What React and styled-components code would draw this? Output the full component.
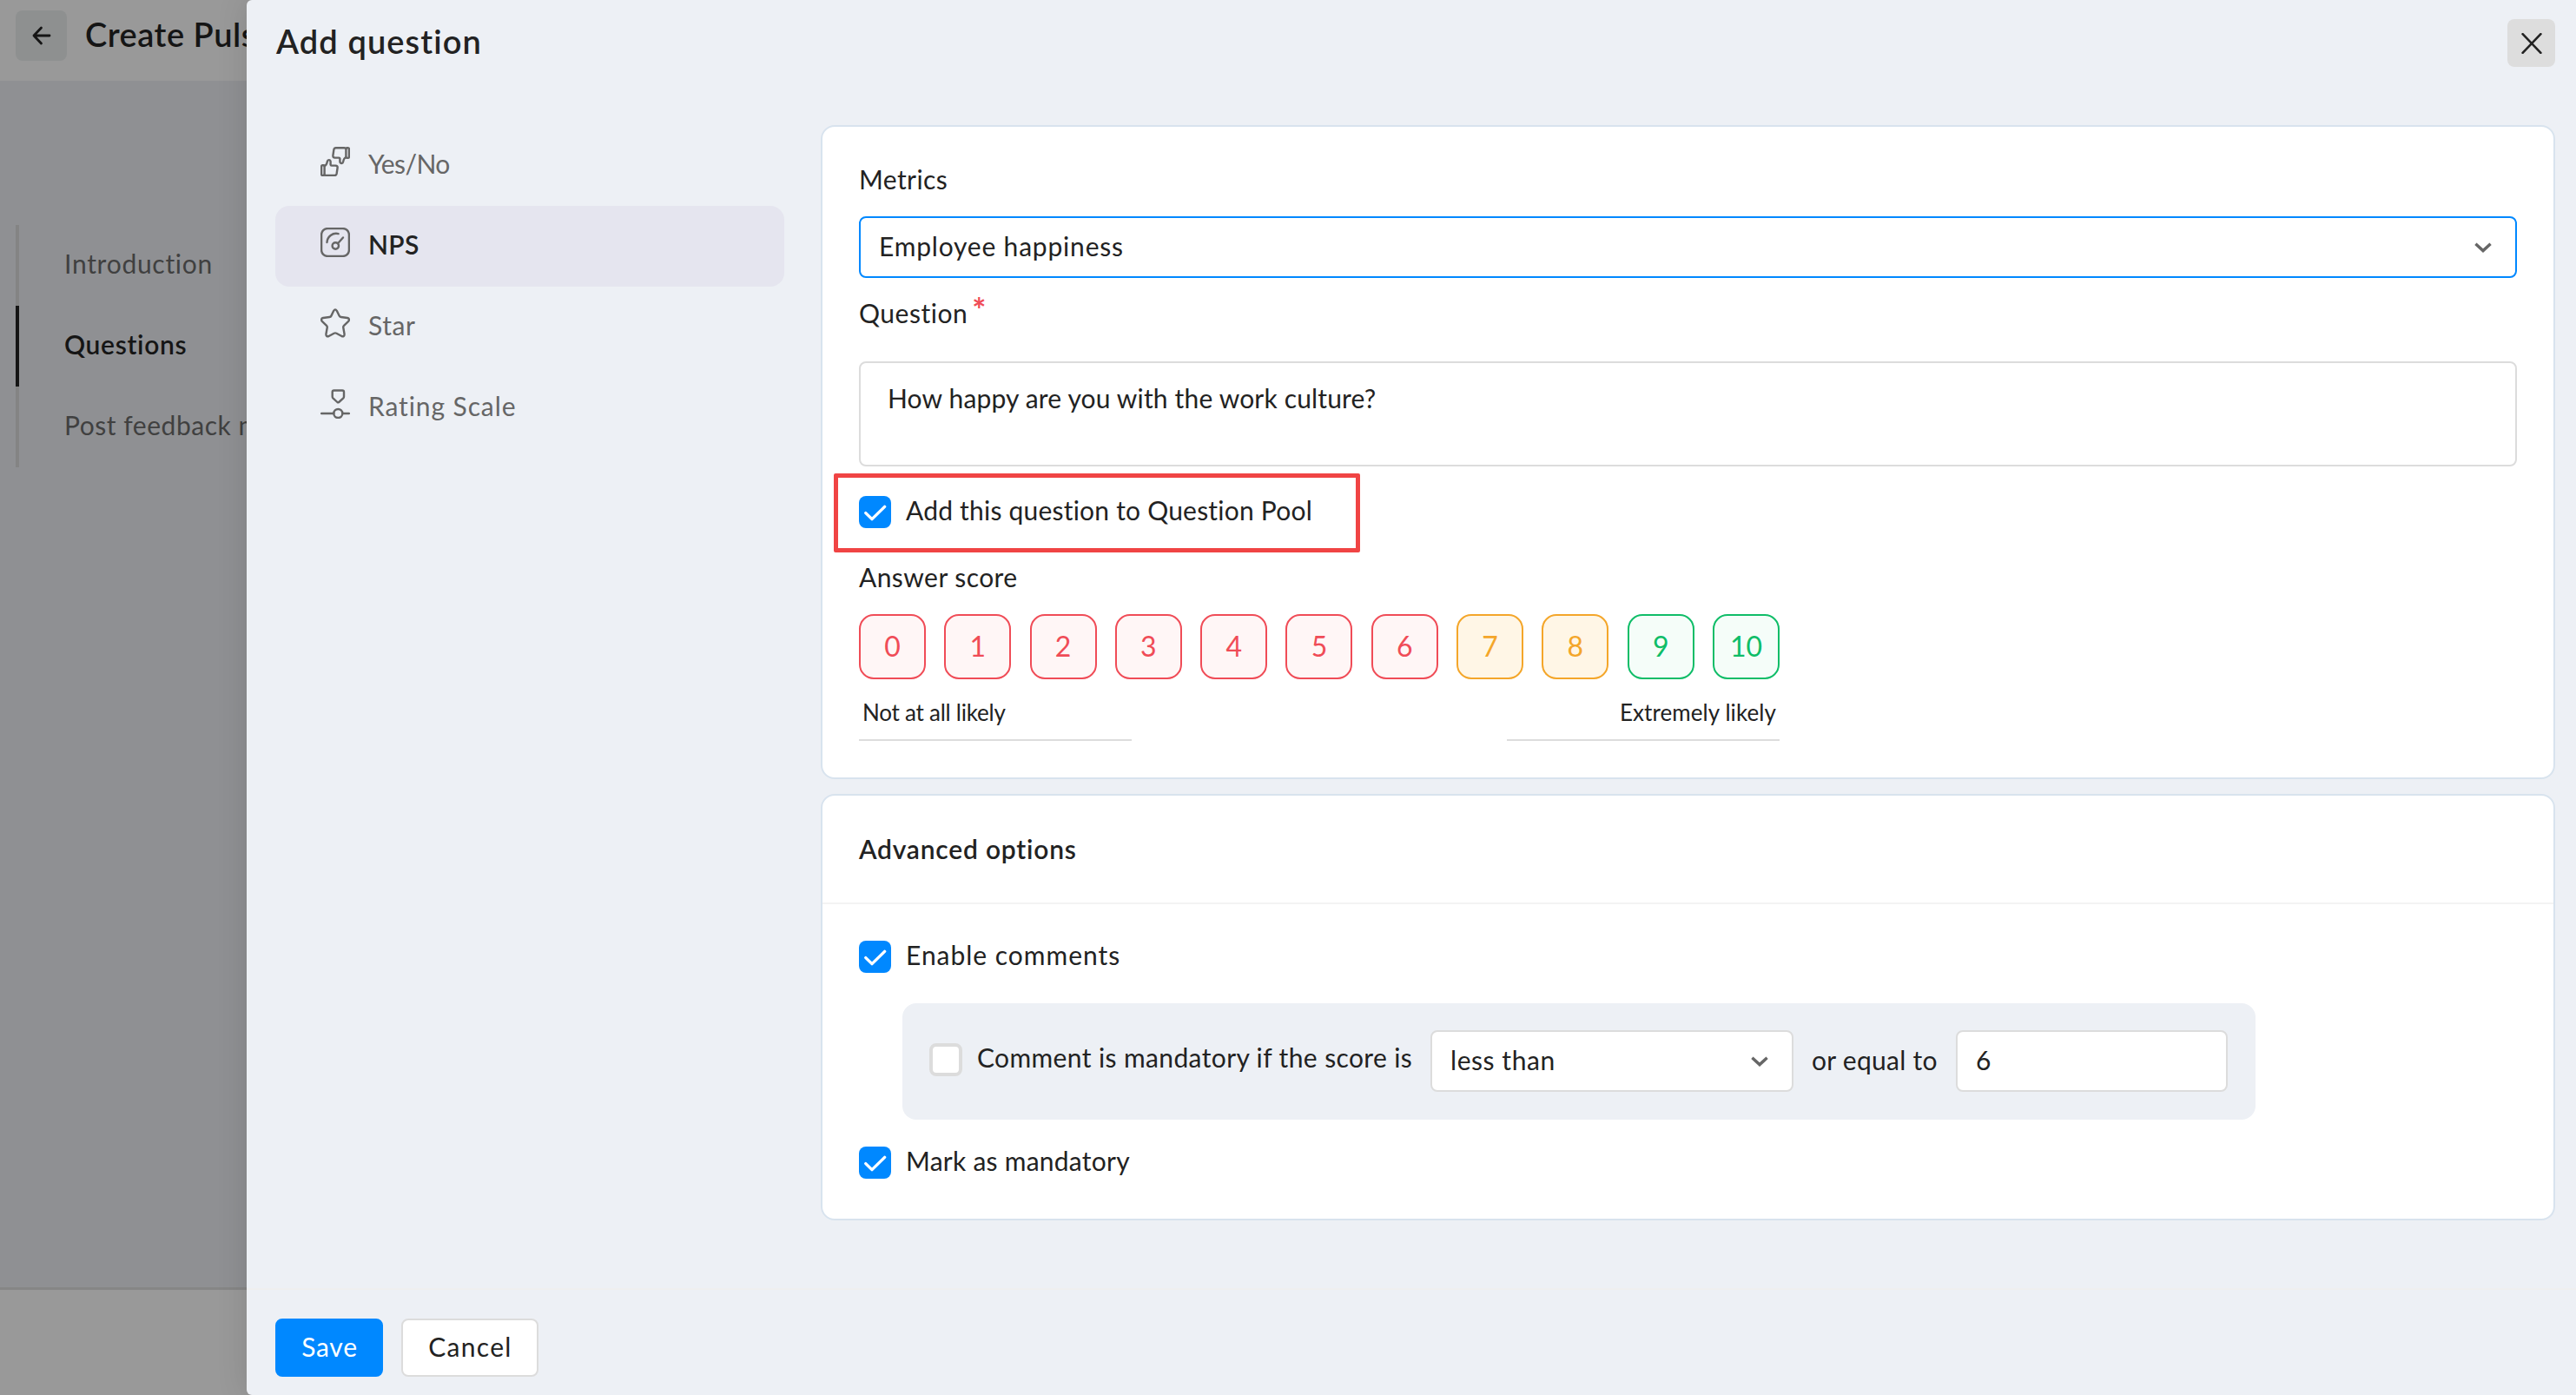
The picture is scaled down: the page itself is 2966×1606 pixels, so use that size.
import React from "react";
import styled, { createGlobalStyle } from "styled-components";

const steps = [
  { label: "Introduction", spacing: 0.72 },
  { label: "Questions", spacing: 0.67, active: true },
  { label: "Post feedback message", spacing: 0.53 },
];

const types = [
  { label: "Yes/No", spacing: -0.6, icon: <ThumbsIcon /> },
  { label: "NPS", spacing: 0.33, icon: <GaugeIcon />, active: true },
  { label: "Star", spacing: 0.58, icon: <StarIcon /> },
  { label: "Rating Scale", spacing: 0.9, icon: <ScaleIcon /> },
];

const tones = {
  red: { line: "#f04c57", fill: "#fff6f6" },
  amber: { line: "#f4a62a", fill: "#fff6e6" },
  green: { line: "#0fbd68", fill: "#f5fdf9" },
};

const toneOf = (score) => (score < 7 ? "red" : score < 9 ? "amber" : "green");

const scores = [0, 1, 2, 3, 4, 5, 6, 7, 8, 9, 10];

function ThumbsIcon() {
  return (
    <Icon width="34" height="34" viewBox="0 0 34 34">
      <g id="thumb">
        <rect x="1.1" y="21.3" width="3.5" height="11.7" rx="1.3" />
        <path d="M4.6 22C6.6 21.5 7.4 19.5 7.9 16.8C8.3 14.6 11.3 14.6 11.6 17V20.6Q11.7 21.6 12.8 21.6H17.3Q20 21.8 19.6 24.2L18.6 31Q18.2 33 16.2 33H6.5Q5.2 32.9 4.6 32.2" />
      </g>
      <use href="#thumb" transform="rotate(180 17 17.1)" />
    </Icon>
  );
}

function GaugeIcon() {
  return (
    <Icon width="34" height="34" viewBox="0 0 34 34">
      <rect x="1.1" y="1.1" width="31.8" height="31.8" rx="7" />
      <path d="M7.5 17A10.6 10.6 0 0 1 20.6 7.1" />
      <circle cx="17.3" cy="21" r="3.7" />
      <path d="M20 18.2L26 11.5" />
    </Icon>
  );
}

function StarIcon() {
  return (
    <Icon width="34" height="34" viewBox="0 0 34 34">
      <path d="M15.2 2.8Q17 0 18.8 2.8L21.6 8.6Q22.2 9.8 23.6 10L31 11Q34.2 12 32.2 14.8L27 19.8Q26 20.8 26.3 22.2L27.6 29.8Q27.6 33 24.4 32L18.4 28.7Q17 28 15.6 28.7L9.6 32Q6.4 33 6.4 29.8L7.7 22.2Q8 20.8 7 19.8L1.8 14.8Q-.2 12 3 11L10.4 10Q11.8 9.8 12.4 8.6Z" />
    </Icon>
  );
}

function ScaleIcon() {
  return (
    <Icon width="34" height="34" viewBox="0 0 34 34">
      <path d="M15.5 1.5H25.2Q27 1.5 27 3.3V8.6Q27 9.6 26.3 10.3L21.2 15Q20.3 15.6 19.4 15L14.4 10.3Q13.7 9.6 13.7 8.6V3.3Q13.7 1.5 15.5 1.5Z" />
      <circle cx="20.3" cy="28" r="5" />
      <path d="M1.1 28H15.3M25.3 28H32.9" />
    </Icon>
  );
}

const Chevron = () => (
  <ChevronSvg width="20" height="13" viewBox="0 0 20 13">
    <path d="M1.4 1.8L10 9.6L18.6 1.8" />
  </ChevronSvg>
);

const Check = ({ checked, spacing, width, children }) => (
  <CheckRow $width={width}>
    {checked ? (
      <Tick width="37" height="37" viewBox="0 0 37 37">
        <path d="M7.8 19.6L15 26.6L29.6 12.4" />
      </Tick>
    ) : (
      <EmptyBox />
    )}
    <Text $spacing={spacing}>{children}</Text>
  </CheckRow>
);

const App = () => {
  return (
    <>
      <GlobalStyle />
      <Page>
        <PageHeader>
          <BackButton>
            <svg width="22" height="22" viewBox="0 0 22 22">
              <path d="M20 11H2M10.5 2L2 11L10.5 20" />
            </svg>
          </BackButton>
          <PageTitle>Create Pulse</PageTitle>
        </PageHeader>
        <Steps>
          {steps.map((step) => (
            <Step key={step.label} $active={step.active}>
              <Text $spacing={step.spacing} $bold={step.active}>
                {step.label}
              </Text>
            </Step>
          ))}
        </Steps>
        <PageFooter />
      </Page>

      <Drawer>
        <DrawerHeader>
          <DrawerTitle>Add question</DrawerTitle>
          <CloseButton>
            <svg width="24" height="24" viewBox="0 0 24 24">
              <path d="M1.6 1.2L22.4 22.8M22.4 1.2L1.6 22.8" />
            </svg>
          </CloseButton>
        </DrawerHeader>

        <DrawerBody>
          <TypeList>
            {types.map((type) => (
              <TypeItem key={type.label} $active={type.active}>
                {type.icon}
                <Text $spacing={type.spacing} $bold={type.active}>
                  {type.label}
                </Text>
              </TypeItem>
            ))}
          </TypeList>

          <Content>
            <QuestionCard>
              <Text $spacing={0.4}>Metrics</Text>
              <MetricSelect>
                <Text $spacing={0.8}>Employee happiness</Text>
                <Chevron />
              </MetricSelect>
              <Text $spacing={0.52}>
                Question<Required>*</Required>
              </Text>
              <QuestionInput>
                <Text $spacing={0.16}>
                  How happy are you with the work culture?
                </Text>
              </QuestionInput>
              <Highlight>
                <Check checked spacing={0.21}>
                  Add this question to Question Pool
                </Check>
              </Highlight>
              <Text $spacing={0.44}>Answer score</Text>
              <ScoreBlock>
                <Scores>
                  {scores.map((score) => (
                    <Score key={score} $tone={tones[toneOf(score)]}>
                      {score}
                    </Score>
                  ))}
                </Scores>
                <Legends>
                  <Legend $spacing={-0.24}>Not at all likely</Legend>
                  <Legend $spacing={0.08} $right>
                    Extremely likely
                  </Legend>
                </Legends>
              </ScoreBlock>
            </QuestionCard>

            <Card>
              <CardHead>
                <Text $spacing={0.78} $bold>
                  Advanced options
                </Text>
              </CardHead>
              <Options>
                <Check checked spacing={0.98}>
                  Enable comments
                </Check>
                <Condition>
                  <Check spacing={0.38} width="577px">
                    Comment is mandatory if the score is
                  </Check>
                  <Field $width="418px">
                    <Text $spacing={0.55}>less than</Text>
                    <Chevron />
                  </Field>
                  <Joiner>
                    <Text $spacing={0.27}>or equal to</Text>
                  </Joiner>
                  <Field $width="313px">
                    <Text>6</Text>
                  </Field>
                </Condition>
                <Check checked spacing={0.25}>
                  Mark as mandatory
                </Check>
              </Options>
            </Card>
          </Content>
        </DrawerBody>

        <DrawerFooter>
          <Button $primary $width="124px" $spacing={0.76}>
            Save
          </Button>
          <Button $width="158px" $spacing={1.3}>
            Cancel
          </Button>
        </DrawerFooter>
      </Drawer>
    </>
  );
};

export default App;

const GlobalStyle = createGlobalStyle`
  * {
    box-sizing: border-box;
  }

  body {
    margin: 0;
    overflow: hidden;
    font-family: Lato, "Liberation Sans", sans-serif;
    font-size: 30px;
    line-height: 36px;
    color: #222;
  }
`;

const Text = styled.span`
  display: block;
  white-space: nowrap;
  letter-spacing: ${({ $spacing = 0 }) => $spacing}px;
  font-weight: ${({ $bold }) => ($bold ? 600 : 400)};
`;

const Icon = styled.svg`
  flex: none;
  margin-bottom: 5px;
  fill: none;
  stroke: #666;
  stroke-width: 2.4;
  stroke-linecap: round;
  stroke-linejoin: round;
`;

const ChevronSvg = styled.svg`
  margin-top: 4px;
  fill: none;
  stroke: #666;
  stroke-width: 3.4;
`;

/* Page behind the drawer, already dimmed */
const Page = styled.div`
  display: flex;
  flex-direction: column;
  height: 100vh;
  background: #8f9093;
`;

const PageHeader = styled.header`
  display: flex;
  gap: 21px;
  height: 93px;
  padding: 12px 18px;
  background: #999999;
`;

const BackButton = styled.div`
  display: flex;
  align-items: center;
  justify-content: center;
  width: 59px;
  height: 58px;
  border-radius: 8px;
  background: #8e9090;

  svg {
    fill: none;
    stroke: #151515;
    stroke-width: 2.8;
    stroke-linecap: round;
    stroke-linejoin: round;
  }
`;

const PageTitle = styled.h1`
  margin: 4px 0 0;
  font-size: 38px;
  line-height: 46px;
  font-weight: 600;
  letter-spacing: 0.52px;
  white-space: nowrap;
  color: #151515;
`;

const Steps = styled.nav`
  flex: 1;
  padding: 166px 0 0 18px;
`;

const Step = styled.div`
  display: flex;
  align-items: center;
  height: 93px;
  padding: 0 0 5px 52px;
  border-left: 4px solid ${({ $active }) => ($active ? "#151515" : "#848484")};
  color: ${({ $active }) => ($active ? "#151515" : "#404040")};
`;

const PageFooter = styled.div`
  height: 124px;
  border-top: 3px solid #868686;
  background: #999999;
`;

const Drawer = styled.section`
  position: absolute;
  top: 0;
  right: 0;
  bottom: 0;
  left: 284px;
  display: flex;
  flex-direction: column;
  border-radius: 6px 0 0 6px;
  background: #edf0f5;
  box-shadow: 0 0 36px rgba(0, 0, 0, 0.12);
`;

const DrawerHeader = styled.header`
  display: flex;
  justify-content: space-between;
  height: 144px;
  padding: 22px 24px 0 34px;
`;

const DrawerTitle = styled.h2`
  margin: 2px 0 0;
  font-size: 38px;
  line-height: 46px;
  font-weight: 600;
  letter-spacing: 1.1px;
`;

const CloseButton = styled.div`
  display: flex;
  align-items: center;
  justify-content: center;
  width: 55px;
  height: 55px;
  border-radius: 8px;
  background: #dddddd;

  svg {
    fill: none;
    stroke: #222;
    stroke-width: 2.6;
    stroke-linecap: round;
  }
`;

const DrawerBody = styled.div`
  flex: 1;
  display: flex;
  gap: 42px;
  padding: 0 24px 0 33px;
`;

const TypeList = styled.div`
  width: 586px;
`;

const TypeItem = styled.div`
  display: flex;
  align-items: center;
  gap: 21px;
  height: 93px;
  padding: 0 0 5px 52px;
  border-radius: 16px;
  background: ${({ $active }) => ($active ? "#e5e5ef" : "transparent")};
  color: ${({ $active }) => ($active ? "#222" : "#666")};
`;

const Content = styled.div`
  flex: 1;
  display: flex;
  flex-direction: column;
  gap: 17px;
`;

const Card = styled.div`
  border: 2px solid #d8e3ee;
  border-radius: 16px;
  background: #fff;
`;

const QuestionCard = styled(Card)`
  padding: 42px;
`;

const Field = styled.div`
  display: flex;
  align-items: center;
  justify-content: space-between;
  width: ${({ $width }) => $width};
  height: 71px;
  padding: 0 27px 3px 21px;
  border: 2px solid #dcdcdc;
  border-radius: 8px;
  background: #fff;
`;

const MetricSelect = styled(Field)`
  width: 100%;
  margin: 25px 0 22px;
  border-color: #0088ff;
`;

const Required = styled.sup`
  margin-left: 5px;
  font-size: 38px;
  font-weight: 700;
  line-height: 0;
  vertical-align: 1px;
  color: #f04c57;
`;

const QuestionInput = styled.div`
  height: 121px;
  margin-top: 38px;
  padding: 22px 31px;
  border: 2px solid #dcdcdc;
  border-radius: 8px;
`;

const Highlight = styled.div`
  width: 606px;
  height: 91px;
  margin: 8px 0 10px -29px;
  padding: 19px 24px;
  border: 5px solid #f04444;
  border-radius: 2px;
`;

const CheckRow = styled.div`
  display: flex;
  gap: 17px;
  width: ${({ $width }) => $width || "auto"};
  height: 39px;
`;

const Tick = styled.svg`
  flex: none;
  margin-top: 2px;
  border-radius: 8px;
  background: #0088ff;
  fill: none;
  stroke: #fff;
  stroke-width: 3.4;
  stroke-linecap: round;
  stroke-linejoin: round;
`;

const EmptyBox = styled.div`
  flex: none;
  width: 38px;
  height: 38px;
  margin-top: 2px;
  border: 4px solid #dcdcdc;
  border-radius: 8px;
  background: #fff;
`;

const ScoreBlock = styled.div`
  width: 1060px;
  margin-top: 25px;
`;

const Scores = styled.div`
  display: flex;
  justify-content: space-between;
`;

const Score = styled.div`
  display: flex;
  align-items: center;
  justify-content: center;
  width: 77px;
  height: 75px;
  padding-bottom: 1px;
  border: 2px solid ${({ $tone }) => $tone.line};
  border-radius: 17px;
  background: ${({ $tone }) => $tone.fill};
  color: ${({ $tone }) => $tone.line};
  font-size: 32px;
`;

const Legends = styled.div`
  display: flex;
  justify-content: space-between;
  margin-top: 22px;
`;

const Legend = styled.div`
  width: 314px;
  padding: 0 4px 15px;
  border-bottom: 2px solid #dcdcdc;
  font-size: 26px;
  line-height: 32px;
  letter-spacing: ${({ $spacing }) => $spacing}px;
  text-align: ${({ $right }) => ($right ? "right" : "left")};
`;

const CardHead = styled.div`
  padding: 43px 42px 44px;
  border-bottom: 2px solid #f3f3f3;
`;

const Options = styled.div`
  padding: 40px 42px 46px;
`;

const Condition = styled.div`
  display: flex;
  width: 1558px;
  height: 134px;
  margin: 35px 0 29px 50px;
  padding: 31px 32px 0 31px;
  border-radius: 16px;
  background: #edf0f5;

  ${CheckRow} {
    margin-top: 13px;
  }
`;

const Joiner = styled.div`
  width: 187px;
  padding: 16px 0 0 21px;
`;

const DrawerFooter = styled.footer`
  display: flex;
  gap: 21px;
  height: 123px;
  padding: 33px;
  border-top: 2px solid #efefef;
`;

const Button = styled.button`
  width: ${({ $width }) => $width};
  height: 67px;
  padding: 0 0 3px 1px;
  border: 2px solid ${({ $primary }) => ($primary ? "#0088ff" : "#dcdcdc")};
  border-radius: 8px;
  background: ${({ $primary }) => ($primary ? "#0088ff" : "#fff")};
  color: ${({ $primary }) => ($primary ? "#fff" : "#222")};
  font: inherit;
  letter-spacing: ${({ $spacing }) => $spacing}px;
`;
